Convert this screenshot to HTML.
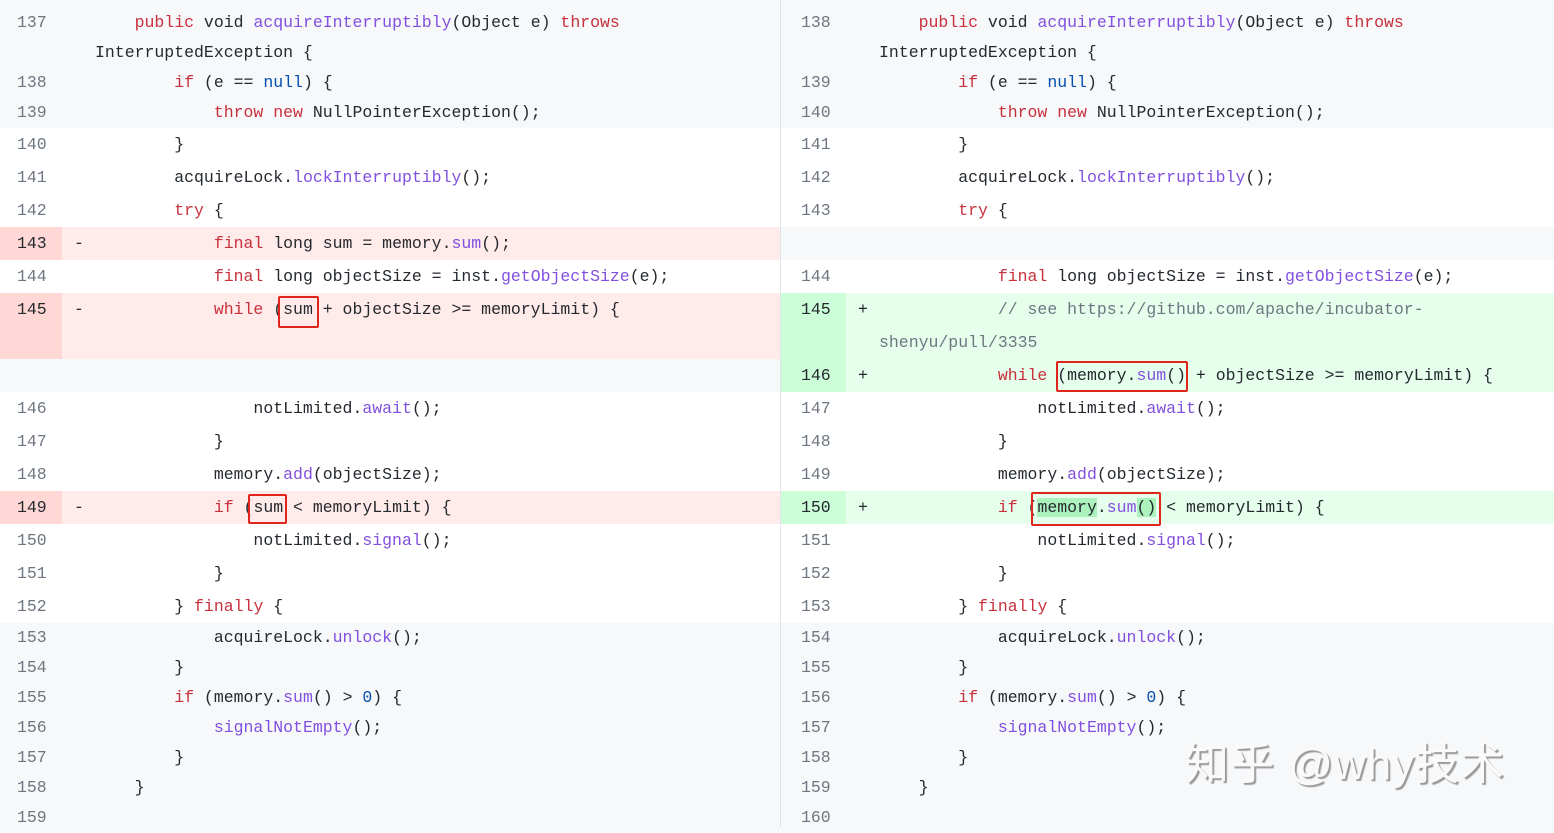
<!DOCTYPE html>
<html><head><meta charset="utf-8"><style>
*{margin:0;padding:0;box-sizing:border-box}
body{width:1554px;height:828px;overflow:hidden;background:#fff;font-family:"Liberation Mono",monospace;font-size:16.5px;color:#24292f;position:relative}
.r{position:absolute;left:0;width:780px}
.R .r{left:781px;width:773px}
.g{background:#f6f8fa}
.d{background:#ffebe9}
.a{background:#e6ffec}
.n{position:absolute;left:0;top:0;bottom:0;width:62px;padding-left:17px;color:#6e7781}
.R .n{padding-left:20px;width:65px}
.d .n{background:#ffd7d5;color:#24292f}
.a .n{background:#ccffd8;color:#24292f}
.m{position:absolute;left:74px}
.R .m{left:77px}
.c{position:absolute;left:95px;white-space:pre}
.R .c{left:98px}
.k{color:#c9303c}.f{color:#8250df}.b{color:#0550ae}.cm{color:#6e7781}
.hl{background:#abf2bc}
.box{position:absolute;border:2px solid #e0261c;border-radius:2px}
.div{position:absolute;left:780px;top:0;width:1px;height:828px;background:#e1e4e8}
.wm{position:absolute;left:1185px;top:728px;font-family:"Liberation Sans","Noto Sans CJK SC",sans-serif;font-size:44px;color:#fafafa;text-shadow:2px 2px 1px #9a9a9a;letter-spacing:1px}
</style></head><body>
<div class="L">
<div class="r g" style="top:0;height:68px;line-height:30px;padding-top:8px"><span class="n" style="padding-top:8px">137</span><span class="c" style="top:8px">    <span class="k">public</span> void <span class="f">acquireInterruptibly</span>(Object e) <span class="k">throws</span>
InterruptedException {</span></div>
<div class="r g" style="top:68px;height:30px;line-height:30px"><span class="n">138</span><span class="c">        <span class="k">if</span> (e == <span class="b">null</span>) {</span></div>
<div class="r g" style="top:98px;height:30px;line-height:30px"><span class="n">139</span><span class="c">            <span class="k">throw</span> <span class="k">new</span> NullPointerException();</span></div>
<div class="r" style="top:128px;height:33px;line-height:33px"><span class="n">140</span><span class="c">        }</span></div>
<div class="r" style="top:161px;height:33px;line-height:33px"><span class="n">141</span><span class="c">        acquireLock.<span class="f">lockInterruptibly</span>();</span></div>
<div class="r" style="top:194px;height:33px;line-height:33px"><span class="n">142</span><span class="c">        <span class="k">try</span> {</span></div>
<div class="r d" style="top:227px;height:33px;line-height:33px"><span class="n">143</span><span class="m">-</span><span class="c">            <span class="k">final</span> long sum = memory.<span class="f">sum</span>();</span></div>
<div class="r" style="top:260px;height:33px;line-height:33px"><span class="n">144</span><span class="c">            <span class="k">final</span> long objectSize = inst.<span class="f">getObjectSize</span>(e);</span></div>
<div class="r d" style="top:293px;height:66px;line-height:33px"><span class="n">145</span><span class="m">-</span><span class="c">            <span class="k">while</span> (sum + objectSize &gt;= memoryLimit) {</span></div>
<div class="r g" style="top:359px;height:33px"></div>
<div class="r" style="top:392px;height:33px;line-height:33px"><span class="n">146</span><span class="c">                notLimited.<span class="f">await</span>();</span></div>
<div class="r" style="top:425px;height:33px;line-height:33px"><span class="n">147</span><span class="c">            }</span></div>
<div class="r" style="top:458px;height:33px;line-height:33px"><span class="n">148</span><span class="c">            memory.<span class="f">add</span>(objectSize);</span></div>
<div class="r d" style="top:491px;height:33px;line-height:33px"><span class="n">149</span><span class="m">-</span><span class="c">            <span class="k">if</span> (sum &lt; memoryLimit) {</span></div>
<div class="r" style="top:524px;height:33px;line-height:33px"><span class="n">150</span><span class="c">                notLimited.<span class="f">signal</span>();</span></div>
<div class="r" style="top:557px;height:33px;line-height:33px"><span class="n">151</span><span class="c">            }</span></div>
<div class="r" style="top:590px;height:33px;line-height:33px"><span class="n">152</span><span class="c">        } <span class="k">finally</span> {</span></div>
<div class="r g" style="top:623px;height:30px;line-height:30px"><span class="n">153</span><span class="c">            acquireLock.<span class="f">unlock</span>();</span></div>
<div class="r g" style="top:653px;height:30px;line-height:30px"><span class="n">154</span><span class="c">        }</span></div>
<div class="r g" style="top:683px;height:30px;line-height:30px"><span class="n">155</span><span class="c">        <span class="k">if</span> (memory.<span class="f">sum</span>() &gt; <span class="b">0</span>) {</span></div>
<div class="r g" style="top:713px;height:30px;line-height:30px"><span class="n">156</span><span class="c">            <span class="f">signalNotEmpty</span>();</span></div>
<div class="r g" style="top:743px;height:30px;line-height:30px"><span class="n">157</span><span class="c">        }</span></div>
<div class="r g" style="top:773px;height:30px;line-height:30px"><span class="n">158</span><span class="c">    }</span></div>
<div class="r g" style="top:803px;height:30px;line-height:30px"><span class="n">159</span></div>
</div>
<div class="R">
<div class="r g" style="top:0;height:68px;line-height:30px"><span class="n" style="padding-top:8px">138</span><span class="c" style="top:8px">    <span class="k">public</span> void <span class="f">acquireInterruptibly</span>(Object e) <span class="k">throws</span>
InterruptedException {</span></div>
<div class="r g" style="top:68px;height:30px;line-height:30px"><span class="n">139</span><span class="c">        <span class="k">if</span> (e == <span class="b">null</span>) {</span></div>
<div class="r g" style="top:98px;height:30px;line-height:30px"><span class="n">140</span><span class="c">            <span class="k">throw</span> <span class="k">new</span> NullPointerException();</span></div>
<div class="r" style="top:128px;height:33px;line-height:33px"><span class="n">141</span><span class="c">        }</span></div>
<div class="r" style="top:161px;height:33px;line-height:33px"><span class="n">142</span><span class="c">        acquireLock.<span class="f">lockInterruptibly</span>();</span></div>
<div class="r" style="top:194px;height:33px;line-height:33px"><span class="n">143</span><span class="c">        <span class="k">try</span> {</span></div>
<div class="r g" style="top:227px;height:33px"></div>
<div class="r" style="top:260px;height:33px;line-height:33px"><span class="n">144</span><span class="c">            <span class="k">final</span> long objectSize = inst.<span class="f">getObjectSize</span>(e);</span></div>
<div class="r a" style="top:293px;height:66px;line-height:33px"><span class="n">145</span><span class="m">+</span><span class="c">            <span class="cm">// see https://github.com/apache/incubator-
shenyu/pull/3335</span></span></div>
<div class="r a" style="top:359px;height:33px;line-height:33px"><span class="n">146</span><span class="m">+</span><span class="c">            <span class="k">while</span> (memory.<span class="f">sum</span>() + objectSize &gt;= memoryLimit) {</span></div>
<div class="r" style="top:392px;height:33px;line-height:33px"><span class="n">147</span><span class="c">                notLimited.<span class="f">await</span>();</span></div>
<div class="r" style="top:425px;height:33px;line-height:33px"><span class="n">148</span><span class="c">            }</span></div>
<div class="r" style="top:458px;height:33px;line-height:33px"><span class="n">149</span><span class="c">            memory.<span class="f">add</span>(objectSize);</span></div>
<div class="r a" style="top:491px;height:33px;line-height:33px"><span class="n">150</span><span class="m">+</span><span class="c">            <span class="k">if</span> (<span class="hl">memory</span>.<span class="f">sum</span><span class="hl">()</span> &lt; memoryLimit) {</span></div>
<div class="r" style="top:524px;height:33px;line-height:33px"><span class="n">151</span><span class="c">                notLimited.<span class="f">signal</span>();</span></div>
<div class="r" style="top:557px;height:33px;line-height:33px"><span class="n">152</span><span class="c">            }</span></div>
<div class="r" style="top:590px;height:33px;line-height:33px"><span class="n">153</span><span class="c">        } <span class="k">finally</span> {</span></div>
<div class="r g" style="top:623px;height:30px;line-height:30px"><span class="n">154</span><span class="c">            acquireLock.<span class="f">unlock</span>();</span></div>
<div class="r g" style="top:653px;height:30px;line-height:30px"><span class="n">155</span><span class="c">        }</span></div>
<div class="r g" style="top:683px;height:30px;line-height:30px"><span class="n">156</span><span class="c">        <span class="k">if</span> (memory.<span class="f">sum</span>() &gt; <span class="b">0</span>) {</span></div>
<div class="r g" style="top:713px;height:30px;line-height:30px"><span class="n">157</span><span class="c">            <span class="f">signalNotEmpty</span>();</span></div>
<div class="r g" style="top:743px;height:30px;line-height:30px"><span class="n">158</span><span class="c">        }</span></div>
<div class="r g" style="top:773px;height:30px;line-height:30px"><span class="n">159</span><span class="c">    }</span></div>
<div class="r g" style="top:803px;height:30px;line-height:30px"><span class="n">160</span></div>
</div>
<div class="div"></div>
<div class="box" style="left:278px;top:296px;width:41px;height:32px"></div>
<div class="box" style="left:248px;top:494px;width:39px;height:30px"></div>
<div class="box" style="left:1056px;top:361px;width:132px;height:31px"></div>
<div class="box" style="left:1031px;top:492px;width:130px;height:34px"></div>
<div class="wm">知乎 @why技术</div>
</body></html>
